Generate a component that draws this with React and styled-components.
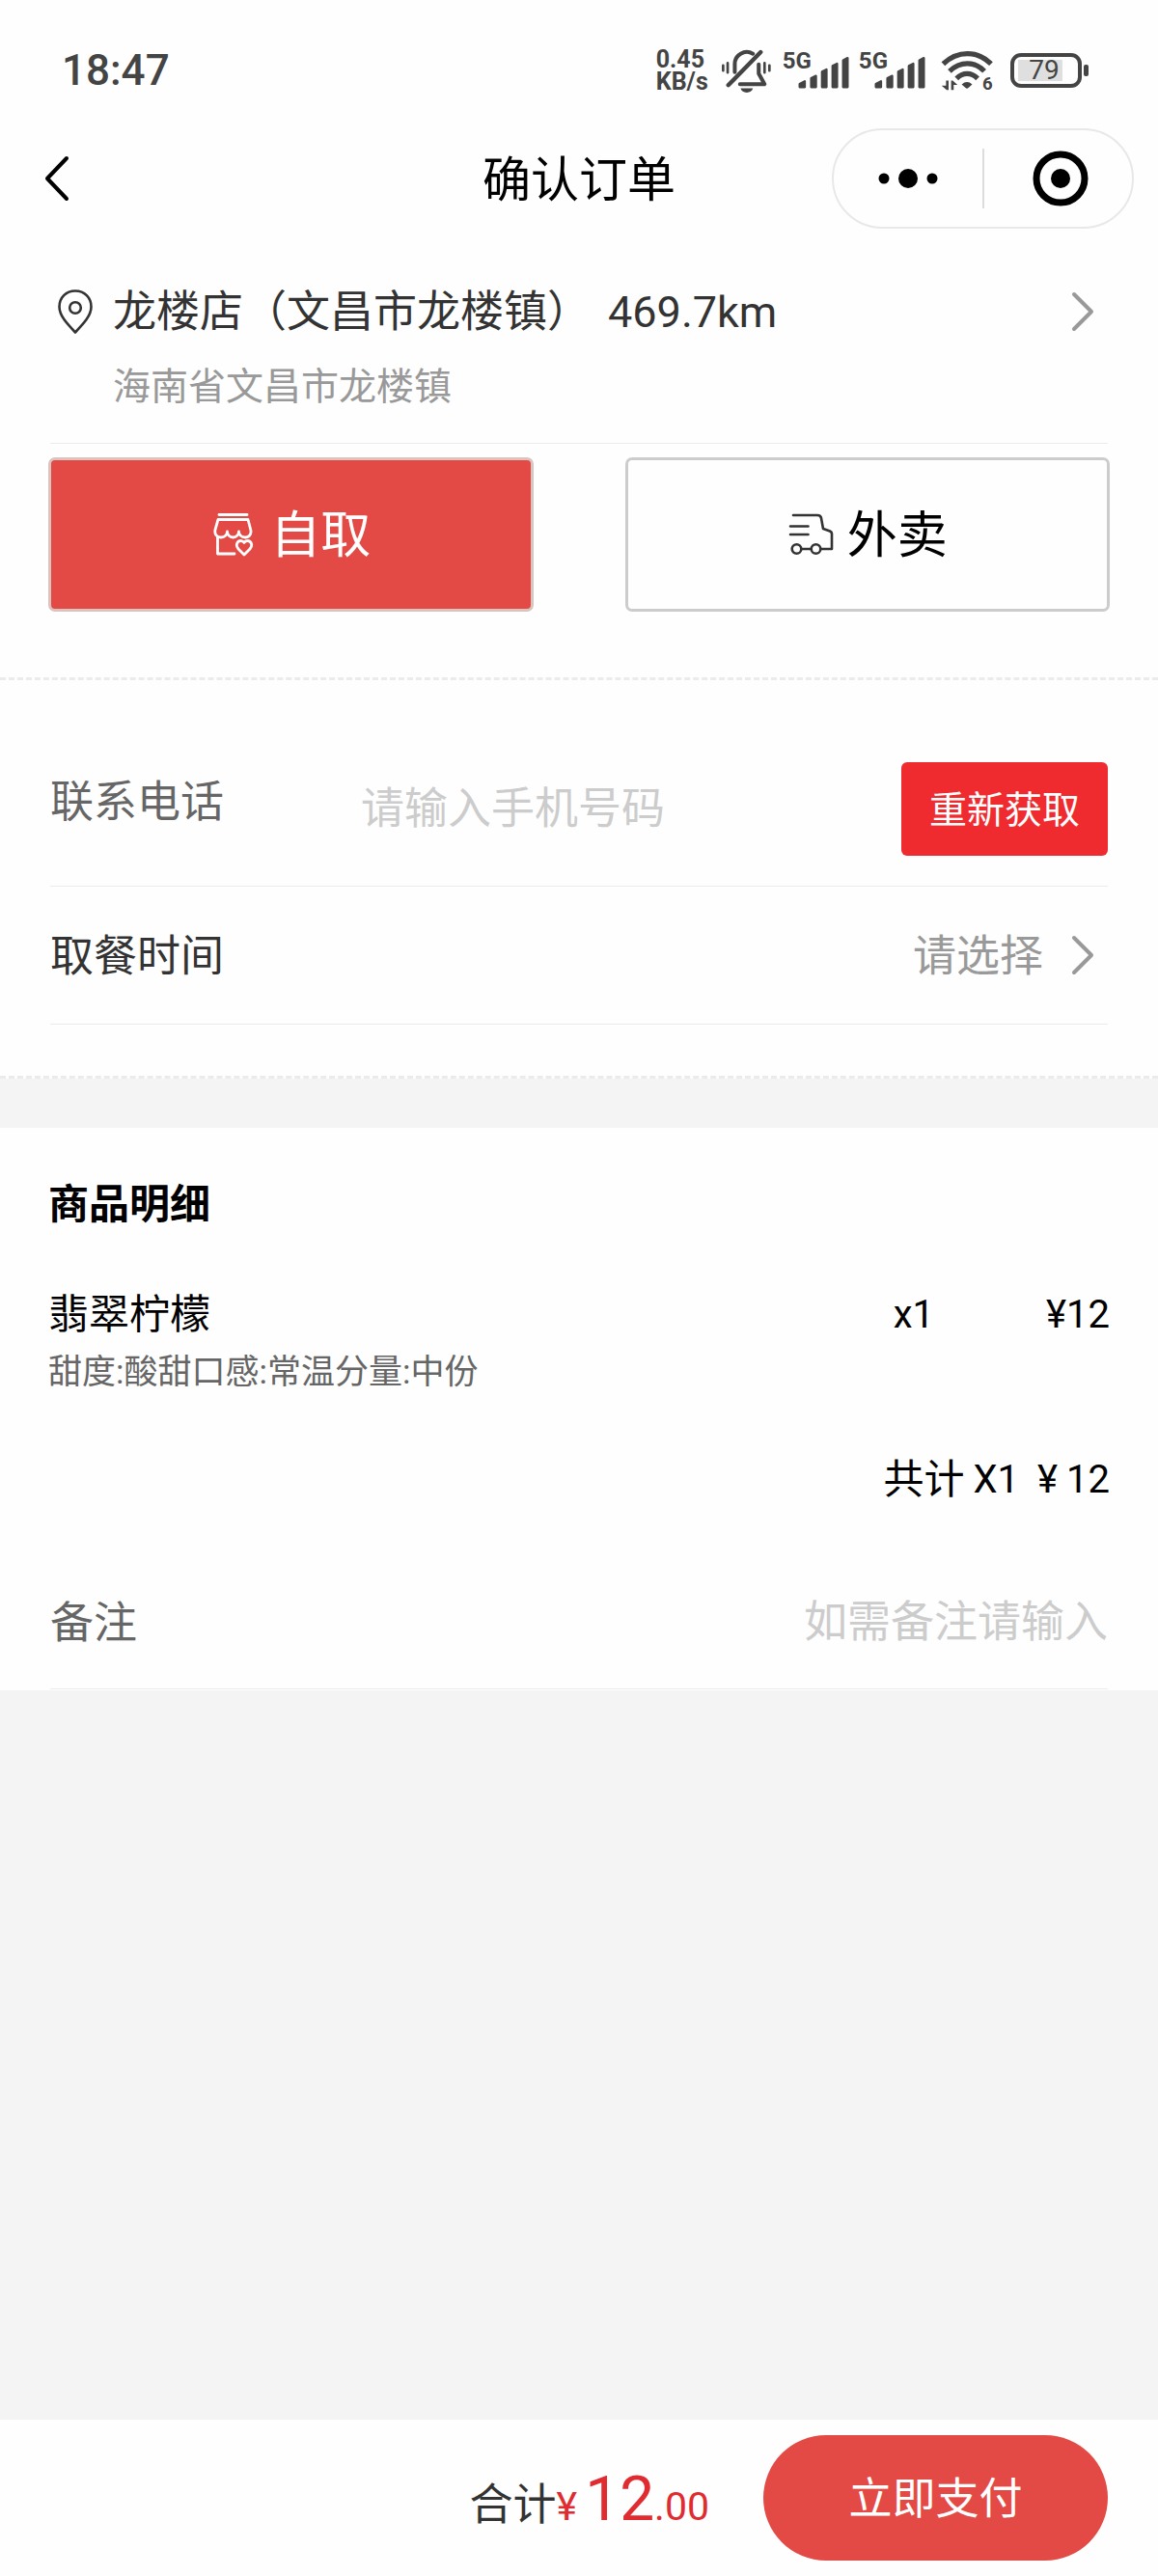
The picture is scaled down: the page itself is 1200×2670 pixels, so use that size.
import React, { useState } from "react";
import styled, { createGlobalStyle, css } from "styled-components";

const color = {
  ink: "#333",
  black: "#000",
  muted: "#666",
  soft: "#999",
  hint: "#ccc",
  line: "#ebebeb",
  panel: "#fefefe",
  page: "#f4f4f4",
  red: "#e44a45",
  brightRed: "#f02b2f",
  price: "#e02b30",
  status: "#444",
};

const GlobalStyle = createGlobalStyle`
  *, *::before, *::after { box-sizing: border-box; }
  body {
    margin: 0;
    background: ${color.page};
    font-family: Roboto, "Noto Sans CJK SC", sans-serif;
    color: ${color.black};
  }
  h1, h2, h3, p { margin: 0; font-weight: 400; }
  button, input, select {
    font-family: inherit;
    margin: 0;
    padding: 0;
    border: 0;
    background: none;
    color: inherit;
  }
  svg { display: block; flex: none; overflow: visible; }
`;

const Page = styled.div`
  min-height: 100vh;
  display: flex;
  flex-direction: column;
`;

const Panel = styled.section`
  background: ${color.panel};
`;

const DashedPanel = styled(Panel)`
  border-bottom: 3px dashed ${color.line};
`;

const StatusBar = styled.div`
  display: flex;
  align-items: center;
  justify-content: space-between;
  height: 96px;
  padding: 50px 72px 0 64px;
  background: ${color.panel};
  color: ${color.status};
`;

const Clock = styled.time`
  font-size: 44px;
  line-height: 48px;
  font-weight: 500;
`;

const StatusIcons = styled.div`
  display: flex;
  align-items: center;
  gap: 10px;
`;

const NetSpeed = styled.div`
  display: flex;
  flex-direction: column;
  margin-right: 2px;
  font-size: 25px;
  line-height: 23px;
  font-weight: 700;
`;

const Signal = styled.div`
  display: flex;
  align-items: flex-end;
  height: 38px;
`;

const SignalLabel = styled.span`
  align-self: flex-start;
  margin-right: -14px;
  font-size: 24px;
  line-height: 18px;
  font-weight: 700;
`;

const WifiSlot = styled.div`
  margin-left: 6px;
`;

const Battery = styled.div`
  display: flex;
  align-items: center;
  gap: 2px;
  margin-left: 7px;

  &::after {
    content: "";
    width: 5px;
    height: 12px;
    border-radius: 2px;
    background: ${color.status};
  }
`;

const BatteryLevel = styled.span`
  width: 74px;
  height: 36px;
  border: 4px solid ${color.status};
  border-radius: 11px;
  padding-right: 4px;
  text-align: center;
  font-size: 28px;
  line-height: 28px;
  background: linear-gradient(#dfdfdf, #dfdfdf) 4px 3px / 46px 22px no-repeat;
`;

const NavBar = styled.header`
  display: grid;
  grid-template-columns: 1fr auto 1fr;
  align-items: center;
  padding: 37px 25px 0;
  background: ${color.panel};
`;

const BackButton = styled.button`
  justify-self: start;
  padding-left: 19px;
`;

const PageTitle = styled.h1`
  padding-top: 3px;
  font-size: 50px;
  line-height: 60px;
`;

const Capsule = styled.div`
  justify-self: end;
  display: flex;
  align-items: center;
  width: 313px;
  height: 104px;
  border: 2px solid #e8e8e8;
  border-radius: 52px;
`;

const CapsuleButton = styled.button`
  flex: 1 1 0;
  display: flex;
  align-items: center;
  justify-content: center;
  height: 62px;

  & + & {
    border-left: 2px solid #ddd;
  }
`;

const StoreCard = styled.a`
  display: grid;
  grid-template-columns: auto 1fr auto;
  align-items: center;
  column-gap: 21px;
  row-gap: 20px;
  margin: 0 52px;
  padding: 55px 15px 31px 8px;
  border-bottom: 1px solid ${color.line};
  color: ${color.ink};
  text-decoration: none;
`;

const StoreName = styled.h2`
  display: flex;
  gap: 18px;
  padding-top: 2px;
  font-size: 45px;
  line-height: 60px;
`;

const StoreAddress = styled.p`
  grid-column: 2;
  font-size: 39px;
  line-height: 54px;
  color: ${color.soft};
`;

const ModeSwitch = styled.div`
  display: grid;
  grid-template-columns: 1fr 1fr;
  gap: 95px;
  padding: 14px 50px 68px;
`;

const ModeButton = styled.button`
  display: flex;
  align-items: center;
  justify-content: center;
  gap: 14px;
  height: 160px;
  border: 3px solid #ccc;
  border-radius: 7px;
  font-size: 52px;
  line-height: 60px;
  ${(p) =>
    p.$active &&
    css`
      background: ${color.red};
      border-color: #d9c4c0;
      color: #fff;
    `}
`;

const ModeText = styled.span`
  padding-top: 4px;
`;

const Rows = styled.div`
  padding: ${(p) => p.$padding};
`;

const Row = styled.div`
  display: flex;
  align-items: ${(p) => p.$align || "center"};
  justify-content: space-between;
  height: ${(p) => p.$height};
  border-bottom: 1px solid ${color.line};
`;

const Label = styled.label`
  padding-top: 3px;
  font-size: 45px;
  line-height: 78px;
  color: ${(p) => (p.$strong ? color.ink : color.muted)};
`;

const TextField = styled.input`
  flex: 1;
  min-width: 0;
  height: 97px;
  font-size: 45px;
  text-align: ${(p) => p.$textAlign || "left"};
  outline: none;

  &::placeholder {
    color: ${color.hint};
    opacity: 1;
  }
`;

const PhoneLabel = styled(Label)`
  width: 322px;
`;

const FetchButton = styled.button`
  width: 214px;
  height: 97px;
  padding-top: 3px;
  border-radius: 6px;
  background: ${color.brightRed};
  color: #fff;
  font-size: 39px;
  line-height: 54px;
`;

const Picker = styled.div`
  display: flex;
  align-items: center;
  gap: 28px;
  padding-right: 15px;
`;

const PickerSelect = styled.select`
  appearance: none;
  padding-top: 4px;
  font-size: 45px;
  line-height: 60px;
  color: ${color.soft};
  text-align-last: right;
  outline: none;
`;

const Details = styled(Panel)`
  margin-top: 51px;
  padding-bottom: 1px;
`;

const DetailBody = styled.div`
  padding: 50px 50px 48px;
  font-size: 42px;
  line-height: 60px;
`;

const DetailTitle = styled.h2`
  font-size: 42px;
  font-weight: 700;
`;

const Item = styled.div`
  display: grid;
  grid-template-columns: 1fr auto 182px;
  row-gap: 5px;
  padding: 54px 0 56px;
`;

const ItemName = styled.h3`
  font-size: 42px;
`;

const Figure = styled.span`
  font-size: 40px;
  text-align: right;
`;

const CountFigure = styled(Figure)`
  margin-right: 10px;
`;

const ItemOptions = styled.p`
  font-size: 35px;
  line-height: 50px;
  color: ${color.muted};
`;

const Subtotal = styled.p`
  display: flex;
  justify-content: flex-end;
  gap: 9px;
`;

const PayBar = styled.footer`
  display: flex;
  align-items: center;
  justify-content: flex-end;
  gap: 56px;
  margin-top: auto;
  height: 162px;
  padding: 0 52px;
  background: ${color.panel};
`;

const Total = styled.p`
  padding-top: 10px;
  font-size: 45px;
  line-height: 80px;
  color: ${color.ink};
`;

const Amount = styled.span`
  color: ${color.price};
  font-size: 41px;
`;

const AmountWhole = styled.span`
  margin-left: 8px;
  font-size: 64px;
`;

const PayButton = styled.button`
  width: 357px;
  height: 130px;
  padding-top: 4px;
  border-radius: 65px;
  background: ${color.red};
  color: #fff;
  font-size: 45px;
  line-height: 60px;
`;

const MutedBellIcon = () => (
  <svg width="55" height="47" viewBox="236 30 164 140" fill="none" stroke="currentColor" strokeLinecap="round" strokeLinejoin="round" aria-hidden="true">
    <path strokeWidth="12" d="M282 104V80a37 37 0 0 1 56-33" />
    <path strokeWidth="12" d="M356 80V108L374 141H298" />
    <path strokeWidth="13" d="M262 144L362 42" />
    <path strokeWidth="8" d="M246 83V99M260 76V105M374 76V105M389 83V99" />
    <path fill="currentColor" stroke="none" d="M300 154H338Q334 167 319 167T300 154Z" />
  </svg>
);

const SignalBars = () => (
  <svg width="53" height="34" viewBox="478 50 160 102" fill="currentColor" stroke="currentColor" strokeWidth="7" strokeLinejoin="round" aria-hidden="true">
    <path d="M483 147V137L499 129V147ZM519 147V119L534 112V147ZM553 147V99L567 92V147ZM586 147V81L600 74V147ZM619 147V63L633 56V147Z" />
  </svg>
);

const WifiIcon = () => (
  <svg width="55" height="43" viewBox="914 38 166 130" fill="none" stroke="currentColor" aria-hidden="true">
    <path strokeWidth="16" d="M921 81Q955 49 997 49T1071 81" />
    <path strokeWidth="16" d="M941 104Q966 80 997 80T1050 104" />
    <path strokeWidth="16" d="M963 127Q978 112 996 112T1029 127" />
    <path fill="currentColor" stroke="none" d="M979 145Q996 131 1012 145L1000 156Q996 160 991 156Z" />
    <path fill="currentColor" stroke="none" d="M930 133h8v30h-6L916 149h14zM946 163h8v-16h12L951 133h-5z" />
    <text x="1044" y="162" fontSize="56" fontWeight="700" fill="currentColor" stroke="none">6</text>
  </svg>
);

const BackIcon = () => (
  <svg width="28" height="50" viewBox="0 0 28 50" fill="none" stroke="#000" strokeWidth="4" strokeLinecap="round" strokeLinejoin="round" aria-hidden="true">
    <path d="M25 4L5 25L25 46" />
  </svg>
);

const ForwardIcon = () => (
  <svg width="24" height="42" viewBox="0 0 24 42" fill="none" stroke="#999" strokeWidth="4" strokeLinecap="round" strokeLinejoin="round" aria-hidden="true">
    <path d="M4 3L22 21L4 39" />
  </svg>
);

const MoreIcon = () => (
  <svg width="64" height="24" viewBox="0 0 64 24" aria-hidden="true">
    <circle cx="7" cy="12" r="5.5" />
    <circle cx="32" cy="12" r="10" />
    <circle cx="57" cy="12" r="5.5" />
  </svg>
);

const CloseIcon = () => (
  <svg width="58" height="58" viewBox="-3 0 58 58" aria-hidden="true">
    <circle cx="29" cy="29" r="25" fill="none" stroke="#000" strokeWidth="7" />
    <circle cx="29" cy="29" r="10" />
  </svg>
);

const PinIcon = () => (
  <svg width="36" height="46" viewBox="0 0 36 46" fill="none" stroke="#333" strokeWidth="2.6" strokeLinejoin="round" aria-hidden="true">
    <path d="M18 1.5C8.5 1.5 1.5 8.5 1.5 18C1.5 27 9 35 18 44.5C27 35 34.5 27 34.5 18C34.5 8.5 27.5 1.5 18 1.5Z" />
    <circle cx="18" cy="19" r="5.8" />
  </svg>
);

const ShopIcon = () => (
  <svg width="48" height="46" viewBox="-3 -1 48 46" fill="none" stroke="currentColor" strokeWidth="2.8" strokeLinecap="round" strokeLinejoin="round" aria-hidden="true">
    <path d="M6 1.5H35" />
    <path d="M5 6.5H36L39 18C39.5 23 36 25 33 25C29 25 26.5 22 26.5 19C26.5 22 24 25 20.5 25C17 25 14.5 22 14.5 19C14.5 22 12 25 8 25C4 25 1 22 2 17Z" />
    <path d="M4.5 25V42H22" />
    <path d="M32 43L26 37C22.5 33 25 28.5 28.5 28.5C30.5 28.5 32 30.5 32 30.5C32 30.5 33.5 28.5 35.5 28.5C39 28.5 41.5 33 38 37Z" />
  </svg>
);

const TruckIcon = () => (
  <svg width="48" height="46" viewBox="-2 -1 48 46" fill="none" stroke="#333" strokeWidth="2.6" strokeLinecap="round" strokeLinejoin="round" aria-hidden="true">
    <path d="M4 2H29Q32.5 2 33 5L35 16L42 18.5Q44 19.5 44 21V37H33" />
    <path d="M1 13.5H19.5M1 22H19.5M13 37H22" />
    <circle cx="7.5" cy="37" r="4.8" />
    <circle cx="27.5" cy="37" r="4.8" />
  </svg>
);

export default function App() {
  const [mode, setMode] = useState("pickup");

  return (
    <Page>
      <GlobalStyle />
      <StatusBar>
        <Clock>18:47</Clock>
        <StatusIcons>
          <NetSpeed>
            <span>0.45</span>
            <span>KB/s</span>
          </NetSpeed>
          <MutedBellIcon />
          <Signal>
            <SignalLabel>5G</SignalLabel>
            <SignalBars />
          </Signal>
          <Signal>
            <SignalLabel>5G</SignalLabel>
            <SignalBars />
          </Signal>
          <WifiSlot>
            <WifiIcon />
          </WifiSlot>
          <Battery>
            <BatteryLevel>79</BatteryLevel>
          </Battery>
        </StatusIcons>
      </StatusBar>

      <NavBar>
        <BackButton type="button" aria-label="返回">
          <BackIcon />
        </BackButton>
        <PageTitle>确认订单</PageTitle>
        <Capsule>
          <CapsuleButton type="button" aria-label="更多">
            <MoreIcon />
          </CapsuleButton>
          <CapsuleButton type="button" aria-label="关闭">
            <CloseIcon />
          </CapsuleButton>
        </Capsule>
      </NavBar>

      <DashedPanel>
        <StoreCard href="#store">
          <PinIcon />
          <StoreName>
            <span>龙楼店（文昌市龙楼镇）</span>
            <span>469.7km</span>
          </StoreName>
          <ForwardIcon />
          <StoreAddress>海南省文昌市龙楼镇</StoreAddress>
        </StoreCard>
        <ModeSwitch>
          <ModeButton
            type="button"
            $active={mode === "pickup"}
            aria-pressed={mode === "pickup"}
            onClick={() => setMode("pickup")}
          >
            <ShopIcon />
            <ModeText>自取</ModeText>
          </ModeButton>
          <ModeButton
            type="button"
            $active={mode === "delivery"}
            aria-pressed={mode === "delivery"}
            onClick={() => setMode("delivery")}
          >
            <TruckIcon />
            <ModeText>外卖</ModeText>
          </ModeButton>
        </ModeSwitch>
      </DashedPanel>

      <DashedPanel>
        <Rows $padding="85px 52px 53px">
          <Row $height="129px" $align="flex-start">
            <PhoneLabel htmlFor="phone">联系电话</PhoneLabel>
            <TextField id="phone" type="tel" placeholder="请输入手机号码" />
            <FetchButton type="button">重新获取</FetchButton>
          </Row>
          <Row $height="143px">
            <Label htmlFor="time" $strong>
              取餐时间
            </Label>
            <Picker>
              <PickerSelect id="time">
                <option>请选择</option>
              </PickerSelect>
              <ForwardIcon />
            </Picker>
          </Row>
        </Rows>
      </DashedPanel>

      <Details>
        <DetailBody>
          <DetailTitle>商品明细</DetailTitle>
          <Item>
            <ItemName>翡翠柠檬</ItemName>
            <Figure>x1</Figure>
            <Figure>¥12</Figure>
            <ItemOptions>甜度:酸甜口感:常温分量:中份</ItemOptions>
          </Item>
          <Subtotal>
            <span>共计</span>
            <CountFigure>X1</CountFigure>
            <Figure>¥</Figure>
            <Figure>12</Figure>
          </Subtotal>
        </DetailBody>
        <Rows $padding="0 52px">
          <Row $height="139px">
            <Label htmlFor="remark">备注</Label>
            <TextField id="remark" type="text" placeholder="如需备注请输入" $textAlign="right" />
          </Row>
        </Rows>
      </Details>

      <PayBar>
        <Total>
          合计
          <Amount>
            ¥<AmountWhole>12</AmountWhole>.00
          </Amount>
        </Total>
        <PayButton type="button">立即支付</PayButton>
      </PayBar>
    </Page>
  );
}
